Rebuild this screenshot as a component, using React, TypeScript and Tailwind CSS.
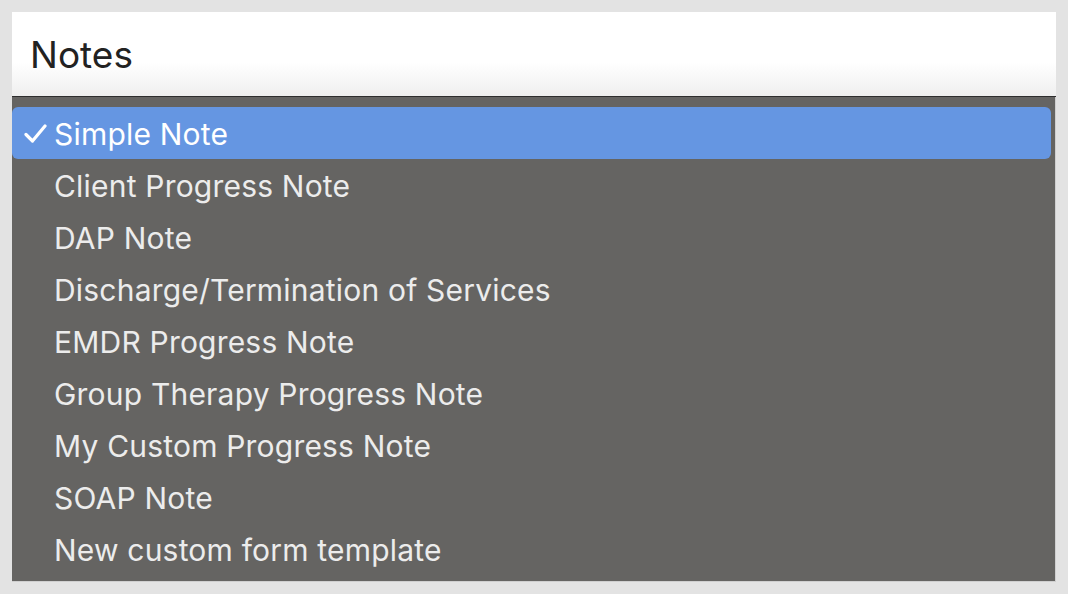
import React from "react";

const items = [
  "Simple Note",
  "Client Progress Note",
  "DAP Note",
  "Discharge/Termination of Services",
  "EMDR Progress Note",
  "Group Therapy Progress Note",
  "My Custom Progress Note",
  "SOAP Note",
  "New custom form template",
];

export default function App() {
  return (
    <div
      className="w-[1068px] h-[594px] bg-[#e3e3e3] p-[12px] flex flex-col"
      style={{ fontFamily: "Inter, 'Noto Sans', sans-serif" }}
    >
      <div className="h-[85px] bg-gradient-to-b from-white from-60% to-[#efefef] flex items-center pl-[18px] border-b border-[#2e2e2e]">
        <span className="text-[37px] text-[#222] leading-none">Notes</span>
      </div>
      <div className="flex-1 bg-[#656462] pt-[10px] pr-[4px] border-r border-b border-[#cfcfcf]">
        {items.map((it, i) => (
          <div
            key={it}
            className={
              "h-[52px] flex items-center rounded-[6px] " +
              (i === 0 ? "bg-[#6596e2] text-white" : "text-[#ececec]")
            }
          >
            <span className="w-[42px] flex justify-end pr-[7px]">
              {i === 0 && (
                <svg width="23" height="19" viewBox="0 0 23 19">
                  <path
                    d="M2 10.5 L8.5 17 L21 2"
                    fill="none"
                    stroke="white"
                    strokeWidth="3.2"
                    strokeLinecap="round"
                    strokeLinejoin="round"
                  />
                </svg>
              )}
            </span>
            <span className="text-[30px] leading-none tracking-[0.2px] mt-[2px]">{it}</span>
          </div>
        ))}
      </div>
    </div>
  );
}
